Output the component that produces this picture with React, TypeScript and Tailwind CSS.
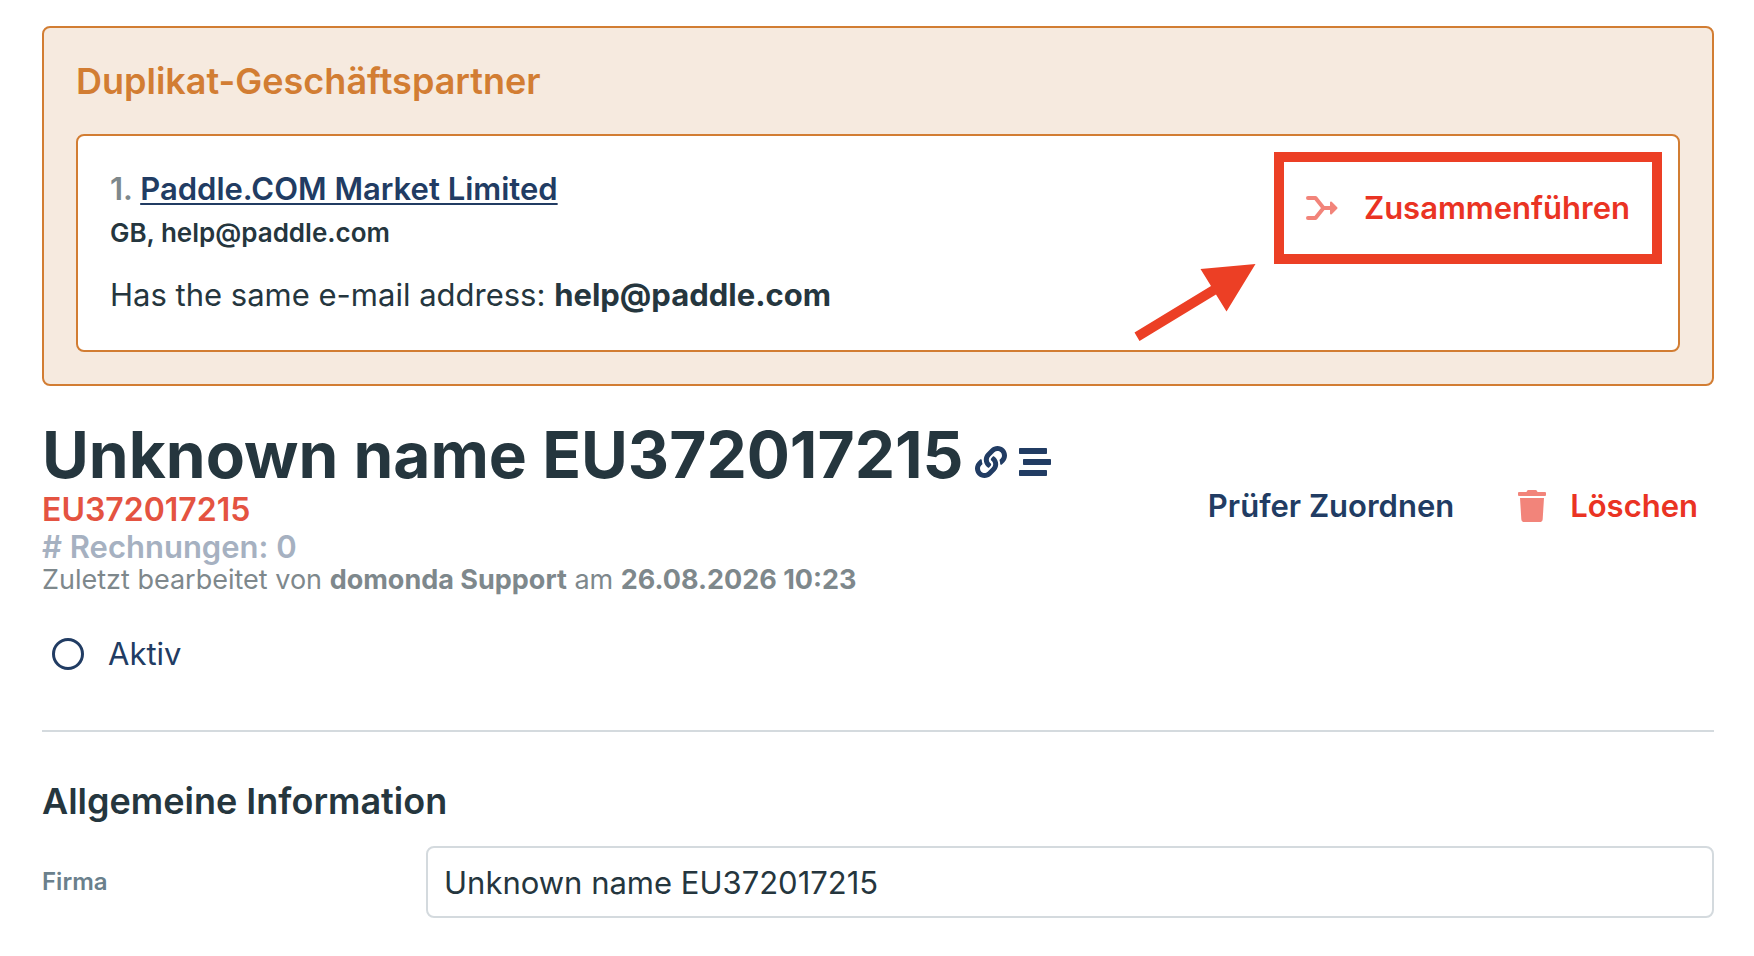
import React from "react";
import { FaLink, FaStream, FaTrash } from "react-icons/fa";

const partner = {
    name: "Unknown name EU372017215",
    vatId: "EU372017215",
    invoices: 0,
    editedBy: "domonda Support",
    editedAt: "26.08.2026 10:23",
};

const duplicates = [
    {
        name: "Paddle.COM Market Limited",
        details: "GB, help@paddle.com",
        reason: "Has the same e-mail address:",
        match: "help@paddle.com",
    },
];

function MergeIcon() {
    return (
        <svg className="w-8 h-6 opacity-60" viewBox="0 0 32 24" fill="none" aria-hidden="true">
            <path
                d="M2 2h7.5L17.5 12L9.5 22H2M17.5 12H26"
                stroke="currentColor"
                strokeWidth="4"
                strokeLinecap="round"
                strokeLinejoin="round"
            />
            <path
                d="M25 6.5v11l5.500-5.500z"
                fill="currentColor"
                stroke="currentColor"
                strokeWidth="2"
                strokeLinejoin="round"
            />
        </svg>
    );
}

function DuplicatesBox() {
    return (
        <section className="rounded-lg border-2 border-[#d27d33] bg-[#f6eadf] p-8">
            <h2 className="mb-8 text-[36px] leading-[42px] font-semibold text-[#d27d33]">
                Duplikat-Geschäftspartner
            </h2>
            {duplicates.map((item, i) => (
                <div
                    key={item.name}
                    className="flex items-start justify-between rounded-lg border-2 border-[#d27d33] bg-white p-8"
                >
                    <div>
                        <h3 className="text-[31px] leading-[42px] font-semibold">
                            <span className="text-[#7e888c]">{i + 1}. </span>
                            <a href="#" className="text-[#213c63] underline decoration-2 underline-offset-3">
                                {item.name}
                            </a>
                        </h3>
                        <p className="mt-1 text-[26px] leading-[38px] font-semibold">{item.details}</p>
                        <p className="mt-5 text-[31px] leading-[46px]">
                            {item.reason} <strong className="font-bold">{item.match}</strong>
                        </p>
                    </div>
                    <div className="relative">
                        <button
                            type="button"
                            className="flex h-20 items-center gap-[26px] px-4 text-[31px] font-semibold text-[#ea3323]"
                        >
                            <MergeIcon />
                            Zusammenführen
                        </button>
                        {/* highlight frame and pointer */}
                        <div className="pointer-events-none absolute -inset-4 border-[10px] border-[#ec3f25]" />
                        <svg
                            className="pointer-events-none absolute top-24 right-full mr-[34px] h-[78px] w-[122px]"
                            viewBox="0 0 122 78"
                            aria-hidden="true"
                        >
                            <path
                                d="M121.500 0L66.500 5L77 22L0.500 68.500L5.500 77L82 30.500L92.500 47.500Z"
                                fill="#ec3f25"
                            />
                        </svg>
                    </div>
                </div>
            ))}
        </section>
    );
}

function PartnerHeader() {
    return (
        <header className="mt-[33px] flex items-center justify-between">
            <div>
                <div className="flex items-center gap-3">
                    <h1 className="text-[64px] leading-[72px] font-bold">{partner.name}</h1>
                    <button type="button" aria-label="Link kopieren" className="mt-[14px] text-[#213c63]">
                        <FaLink className="size-8" />
                    </button>
                    <button type="button" aria-label="Verlauf" className="mt-[14px] text-[#213c63]">
                        <FaStream className="size-8" />
                    </button>
                </div>
                <p className="text-[32px] leading-[37px] font-semibold text-[#e45341]">{partner.vatId}</p>
                <p className="text-[31px] leading-[37px] font-semibold text-[#a6b1c1]">
                    # Rechnungen: {partner.invoices}
                </p>
                <p className="text-[27px] leading-[30px] text-[#7e888c]">
                    Zuletzt bearbeitet von <strong className="font-bold">{partner.editedBy}</strong> am{" "}
                    <strong className="font-bold">{partner.editedAt}</strong>
                </p>
            </div>
            <div className="flex items-center gap-[30px] pb-0.5 text-[31px] font-semibold">
                <button type="button" className="h-16 px-4 text-[#213c63]">
                    Prüfer Zuordnen
                </button>
                <button type="button" className="flex h-16 items-center gap-[22px] px-4 text-[#ea3323]">
                    <FaTrash className="size-8 opacity-60" />
                    Löschen
                </button>
            </div>
        </header>
    );
}

export default function App() {
    return (
        <main className="min-h-screen bg-white pt-[26px] pr-10 pb-[38px] pl-[42px] font-['Inter',sans-serif] text-[#25363e]">
            <DuplicatesBox />
            <PartnerHeader />

            <label className="mt-[27px] flex h-16 w-fit items-center gap-6 pl-[10px] text-[31px] text-[#213c63]">
                <input
                    type="checkbox"
                    className="size-8 appearance-none rounded-full border-3 border-[#213c63] checked:bg-[#213c63]"
                />
                Aktiv
            </label>

            <hr className="mt-11 border-t-2 border-[#d4dade]" />

            <section className="mt-12">
                <h2 className="text-[36px] leading-[42px] font-semibold">Allgemeine Information</h2>
                <div className="mt-6 flex items-center">
                    <label htmlFor="company" className="w-96 shrink-0 text-2xl font-semibold text-[#6a808c]">
                        Firma
                    </label>
                    <input
                        id="company"
                        type="text"
                        defaultValue={partner.name}
                        className="h-[72px] min-w-0 flex-1 rounded-lg border-2 border-[#d4dade] px-4 text-[31px]"
                    />
                </div>
            </section>
        </main>
    );
}
